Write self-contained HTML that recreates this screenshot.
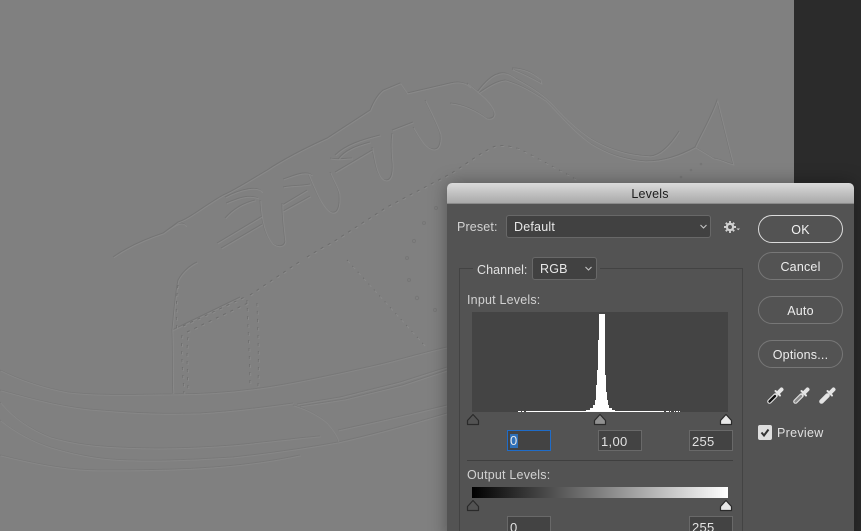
<!DOCTYPE html>
<html><head><meta charset="utf-8">
<style>
html,body{margin:0;padding:0;width:861px;height:531px;overflow:hidden;background:#808080;font-family:"Liberation Sans",sans-serif}
#w{position:relative;width:861px;height:531px;overflow:hidden;background:#808080}
.a{position:absolute;box-sizing:border-box}
.t{position:absolute;font-size:12.5px;line-height:16px;color:#d2d2d2;white-space:nowrap;letter-spacing:.15px}
.sel{position:absolute;box-sizing:border-box;background:#414141;border:1px solid #686868;border-radius:3px;color:#e8e8e8;font-size:12.5px;line-height:23px;letter-spacing:.2px}
.inp{position:absolute;box-sizing:border-box;background:#434343;border:1px solid #696969;color:#e2e2e2;font-size:13px;line-height:21px;height:21px;padding-left:2px;width:44px;letter-spacing:.3px}
.btn{position:absolute;box-sizing:border-box;left:758px;width:85px;height:28px;border:1px solid #777;border-radius:14px;color:#ededed;font-size:12.5px;line-height:28px;text-align:center;letter-spacing:.2px}
svg{position:absolute;overflow:visible}
</style></head>
<body><div id="w">
<svg style="left:0;top:0;filter:blur(.35px)" width="861" height="531" viewBox="0 0 861 531" fill="none">
<defs>
<g id="s" stroke-width="1">
<path d="M113,257C130,245 148,238 163,233L178,222C190,218 205,205 223,195C235,190 250,180 267,170C285,158 305,148 327,138L370,110C374,100 378,94 383,90L400,83L407,93L450,83C458,81 465,82 470,87"/>
<path d="M225,197C240,189 258,185 262,192M167,230C176,224 182,220 186,226"/>
<path d="M260,200C261,220 265,235 272,243C277,247 284,247 285,241C283,225 282,215 282,203"/>
<path d="M308,173C315,190 322,208 331,212C338,214 340,205 339,193C337,185 332,178 330,172"/>
<path d="M372,147C375,165 378,180 386,180C392,180 393,170 392,160C391,150 391,140 392,133"/>
<path d="M413,127C418,135 424,148 433,149C440,150 441,140 440,133C436,122 430,110 425,100"/>
<path d="M226,203C238,198 248,194 258,198M225,218C232,210 242,203 255,200"/>
<path d="M283,179C295,175 305,170 312,175M283,187C292,185 300,186 310,184"/>
<path d="M335,155C345,145 360,140 380,135M338,159C345,150 355,146 370,142M330,158C338,160 345,158 352,158"/>
<path d="M217,243L262,216M221,248L262,224M282,205L307,190M283,211L310,196M335,172L372,150M392,130L413,122"/>
<path d="M477,92C483,84 490,76 497,74C504,71 509,74 515,78C530,86 543,94 552,104C565,118 575,128 590,138C605,147 625,155 650,156C662,155 672,142 679,131"/>
<path d="M478,93C486,88 495,81 505,80C520,84 533,92 545,100C560,115 572,130 590,143C605,152 620,159 645,161C665,161 680,155 695,147"/>
<path d="M512,68C522,68 532,72 540,79L541,83C532,78 522,73 512,69"/>
<path d="M695,147C703,130 712,115 717,100C722,120 728,145 733,164C725,162 720,159 713,158C707,154 700,150 695,147Z"/>
<path d="M467,83C478,92 490,100 494,112C495,118 490,119 486,118C476,110 462,104 450,103"/>
<path d="M173,393C172,375 173,350 172,330C174,310 175,295 178,280C182,272 190,265 197,262"/>
<path d="M172,330L240,297"/>
</g>
<g id="o" stroke-width="1">
<path d="M0,370C20,380 45,388 67,392C100,396 140,394 173,394C205,394 240,391 267,387C300,382 340,373 367,367C395,361 420,353 447,347"/>
<path d="M0,390C30,398 65,408 100,410C135,413 170,414 200,413C235,411 265,407 293,403"/>
<path d="M293,405C310,410 322,418 327,423C333,430 337,436 338,441"/>
<path d="M297,404L340,397L400,382L447,367M300,406L345,399L402,385L447,370"/>
<path d="M0,420C15,432 32,441 50,447C80,456 105,460 133,460C165,461 200,459 233,457C270,453 305,448 338,442C375,434 410,424 447,413"/>
<path d="M0,402C15,420 35,431 50,437C75,444 95,446 117,447C155,449 195,448 233,445C265,442 295,438 320,436"/>
<path d="M338,430C375,422 410,414 447,405"/>
<path d="M0,455C40,465 70,470 100,470C160,470 230,470 300,455"/>
</g>
<g id="d" stroke-width="1" stroke-dasharray="3 5">
<path d="M307,257C315,252 325,246 333,242L387,207L450,174C465,165 480,153 493,147C500,144 510,146 520,149C540,160 560,170 577,180"/>
<path d="M347,260L427,348"/>
<path d="M178,285C176,300 176,315 177,330M182,335C181,355 183,375 184,393M188,337C186,355 188,375 188,391"/>
<path d="M183,326L247,296M187,332L250,302M247,300C248,330 250,360 250,387M257,303C258,330 259,360 258,387"/>
<path d="M250,295L302,260"/>
</g>
</defs>
<g>
<use href="#o" stroke="#787878"/>
<use href="#o" stroke="#878787" transform="translate(.8,.9)"/>
<use href="#s" stroke="#747474"/>
<use href="#s" stroke="#898989" transform="translate(.8,.9)"/>
<use href="#d" stroke="#6c6c6c"/>
<use href="#d" stroke="#8b8b8b" transform="translate(.8,.9)"/>
</g>
<g fill="#808080" stroke="#767676">
<circle cx="436" cy="208" r="1.5"/><circle cx="424" cy="223" r="1.5"/><circle cx="414" cy="241" r="1.6"/><circle cx="407" cy="258" r="1.5"/><circle cx="409" cy="280" r="1.5"/><circle cx="417" cy="298" r="1.7"/><circle cx="435" cy="310" r="1.5"/>
<circle cx="681" cy="177" r=".8"/><circle cx="691" cy="170" r=".8"/><circle cx="701" cy="164" r=".8"/>
</g>
</svg>

<div class="a" style="left:794px;top:0;width:67px;height:531px;background:#2b2b2b"></div>

<!-- dialog -->
<div class="a" style="left:447px;top:183px;width:407px;height:360px;background:#535353;border-radius:5px 5px 0 0;box-shadow:0 0 18px rgba(0,0,0,.35)"></div>
<div class="a" style="left:447px;top:183px;width:407px;height:21px;border-radius:5px 5px 0 0;background:linear-gradient(#dadada,#a9a9a9);border-bottom:1px solid #8a8a8a;color:#1c1c1c;font-size:12.5px;line-height:23px;text-align:center;padding-right:1px;letter-spacing:.2px">Levels</div>

<div class="t" style="left:457px;top:219px">Preset:</div>
<div class="sel" style="left:506px;top:215px;width:205px;height:23px;padding-left:7px;line-height:23px">Default</div>
<svg style="left:700px;top:224px" width="8" height="6" fill="none"><path d="M.5,1L3.5,4L6.5,1" stroke="#c4c4c4" stroke-width="1.1"/></svg>
<svg style="left:723px;top:220px" width="18" height="14">
<g fill="none" stroke="#d0d0d0"><circle cx="7" cy="7" r="3.1" stroke-width="2.2"/><path stroke-width="1.9" d="M7,1V3M7,11V13M1,7H3M11,7H13M2.8,2.8L4.2,4.2M9.8,9.8L11.2,11.2M2.8,11.2L4.2,9.8M9.8,4.2L11.2,2.8"/></g>
<path d="M13.5,8.5H17L15.2,10.2Z" fill="#d0d0d0"/></svg>

<!-- group box -->
<div class="a" style="left:459px;top:268px;width:284px;height:280px;border:1px solid #434343"></div>
<div class="a" style="left:473px;top:262px;width:127px;height:14px;background:#535353"></div>
<div class="t" style="left:477px;top:262px;letter-spacing:.05px;color:#e0e0e0">Channel:</div>
<div class="sel" style="left:532px;top:257px;width:65px;height:23px;padding-left:7px">RGB</div>
<svg style="left:585px;top:266px" width="8" height="6" fill="none"><path d="M.5,1L3.5,4L6.5,1" stroke="#c4c4c4" stroke-width="1.1"/></svg>

<div class="t" style="left:467px;top:292px;letter-spacing:.2px">Input Levels:</div>
<div class="a" style="left:472px;top:312px;width:256px;height:100px;background:#444"></div>
<svg style="left:472px;top:312px" width="256" height="100" viewBox="472 312 256 100" shape-rendering="crispEdges">
<path fill="#fff" d="M599,314H605V375H606V392H607V400H608V405H609V408H612V410H615V411H664V412H526V411H586V410H590V408H593V405H595V400H596V385H597V370H598V340H599Z"/>
<path fill="#fff" d="M518,411h3v1h-3zM522,411h2v1h-2zM666,411h3v1h-3zM674,411h1v1h-1zM676,411h2v1h-2zM679,411h1v1h-1zM670,411h1v1h-1z"/>
</svg>

<svg style="left:465px;top:412px" width="270" height="16">
<g stroke="#2a2a2a" stroke-width="1.2" stroke-linejoin="round">
<path d="M8,2.5L13.5,8.5V12.5H2.5V8.5Z" fill="#535353"/>
<path d="M135,2.5L140.5,8.5V12.5H129.5V8.5Z" fill="#909090"/>
<path d="M261,2.5L266.5,8.5V12.5H255.5V8.5Z" fill="#e8e8e8"/>
</g></svg>

<div class="inp" style="left:507px;top:430px;border-color:#1f6cc8">0</div>
<div class="a" style="left:510px;top:434px;width:8px;height:14px;background:#2f70b8"></div>
<div class="t" style="left:510px;top:433px;font-size:13px;color:#e6e6e6">0</div>
<div class="inp" style="left:598px;top:430px">1,00</div>
<div class="inp" style="left:689px;top:430px">255</div>

<div class="a" style="left:467px;top:460px;width:266px;height:1px;background:#3f3f3f"></div>
<div class="t" style="left:467px;top:467px;letter-spacing:.2px">Output Levels:</div>
<div class="a" style="left:472px;top:487px;width:256px;height:11px;background:linear-gradient(90deg,#000,#fff)"></div>
<svg style="left:465px;top:498px" width="270" height="16">
<g stroke="#2a2a2a" stroke-width="1.2" stroke-linejoin="round">
<path d="M8,2.5L13.5,8.5V12.5H2.5V8.5Z" fill="#535353"/>
<path d="M261,2.5L266.5,8.5V12.5H255.5V8.5Z" fill="#e8e8e8"/>
</g></svg>
<div class="inp" style="left:507px;top:516px">0</div>
<div class="inp" style="left:689px;top:516px">255</div>

<!-- buttons -->
<div class="btn" style="top:215px;border-color:#dcdcdc;color:#f2f2f2">OK</div>
<div class="btn" style="top:252px">Cancel</div>
<div class="btn" style="top:296px">Auto</div>
<div class="btn" style="top:340px">Options...</div>

<!-- eyedroppers -->
<svg style="left:765px;top:385px" width="72" height="22" viewBox="0 0 72 22" fill="none" stroke-linecap="round">
<g id="e1">
<path d="M13.5,7.5L16.5,4.5" stroke="#e4e4e4" stroke-width="4"/>
<path d="M10.5,6L15,10.5" stroke="#e4e4e4" stroke-width="2"/>
<path d="M10.5,10.5L4.5,16.5" stroke="#e4e4e4" stroke-width="4.6"/>
<path d="M10,11L4.5,16.5" stroke="#111" stroke-width="2.4"/>
</g>
<g transform="translate(26,0)">
<path d="M13.5,7.5L16.5,4.5" stroke="#e4e4e4" stroke-width="4"/>
<path d="M10.5,6L15,10.5" stroke="#e4e4e4" stroke-width="2"/>
<path d="M10.5,10.5L4.5,16.5" stroke="#e4e4e4" stroke-width="4.6"/>
<path d="M10,11L4.5,16.5" stroke="#8a8a8a" stroke-width="2.4"/>
</g>
<g transform="translate(52,0)">
<path d="M13.5,7.5L16.5,4.5" stroke="#e4e4e4" stroke-width="4"/>
<path d="M10.5,6L15,10.5" stroke="#e4e4e4" stroke-width="2"/>
<path d="M10.5,10.5L4.5,16.5" stroke="#e4e4e4" stroke-width="4.6"/>
</g>
</svg>

<div class="a" style="left:758px;top:425px;width:14px;height:15px;background:#dedede;border-radius:2px"></div>
<svg style="left:758px;top:425px" width="14" height="15" fill="none"><path d="M3.5,7.5L6,10.5L10.5,4.5" stroke="#333" stroke-width="2"/></svg>
<div class="t" style="left:777px;top:425px;color:#e0e0e0;letter-spacing:.3px">Preview</div>
</div></body></html>
